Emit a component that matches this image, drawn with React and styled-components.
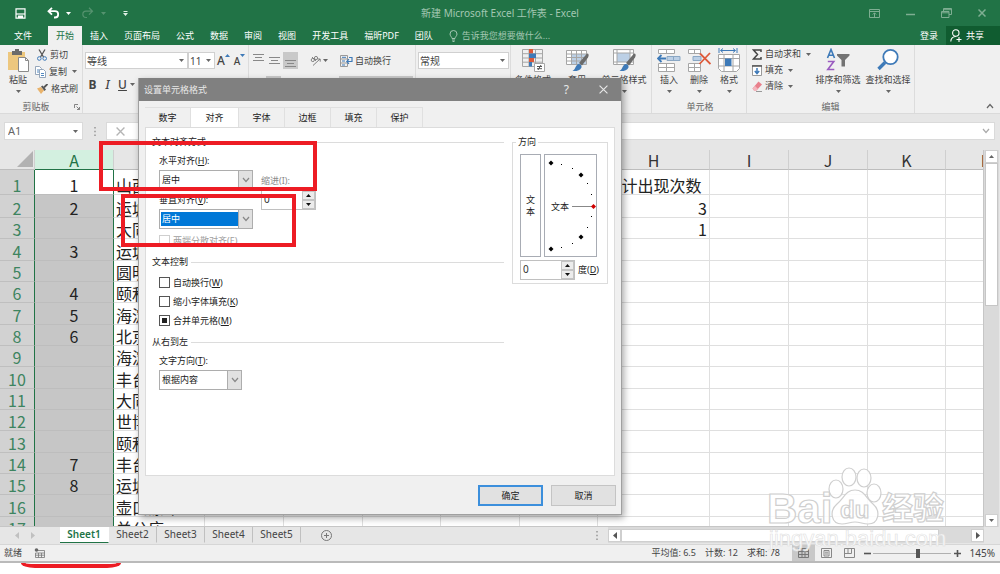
import React from 'react';
import styled, { createGlobalStyle, css } from 'styled-components';

const GREEN = '#217346';
const RED = '#ed1c24';
const BLUE = '#3e7ab8';

const GlobalStyle = createGlobalStyle`
* { box-sizing: border-box; }
body {
  margin: 0;
  background: #fff;
}
button, input, select, table {
  font: inherit;
  color: inherit;
}
button {
  border: 0;
  padding: 0;
  background: none;
  white-space: nowrap;
}
svg { display: block; flex: none; }
`;

const App_window = styled.div`
position: relative;
display: flex;
flex-direction: column;
height: 100vh;
overflow: hidden;
font-family: "Noto Sans", "Noto Sans CJK SC", sans-serif;
font-size: 9px;
line-height: 12px;
color: #444;
`;

/* ---------- title bar and ribbon tabs ---------- */

const Title_bar = styled.header`
display: grid;
grid-template-columns: 1fr auto 1fr;
align-items: center;
flex: none;
height: 26px;
background: ${GREEN};
color: #a3c7b2;
font-size: 10px;
`;
const Quick_access = styled.div`
display: flex;
align-items: center;
gap: 7px;
padding-left: 15px;
color: #fff;
button:nth-of-type(2) { margin-left: 14px; }
button:nth-of-type(3) { margin-left: 4px; }
button:nth-of-type(4) { margin-left: 10px; }
`;
const Window_buttons = styled.div`
display: flex;
justify-content: flex-end;
gap: 26px;
padding-right: 14px;
color: #7fae92;
`;
const Ribbon_tabs = styled.nav`
display: flex;
align-items: stretch;
flex: none;
height: 19px;
padding-left: 6px;
background: ${GREEN};
`;
const Ribbon_tab = styled.button`
padding: 0 8px;
color: ${p => p.$active ? GREEN : '#fff'};
background: ${p => p.$active ? '#f0f0f0' : 'none'};
&:first-child { margin-right: 8px; }
`;
const Tell_me = styled.button`
display: flex;
align-items: center;
gap: 4px;
margin-left: 8px;
color: #a3c7b2;
`;
const Account = styled.div`
display: flex;
margin-left: auto;
color: #fff;
`;
const Share = styled.button`
display: flex;
align-items: center;
gap: 4px;
width: 54px;
margin-left: 8px;
padding-left: 4px;
background: #105c30;
`;

/* ---------- ribbon ---------- */

const Ribbon = styled.div`
display: flex;
flex: none;
height: 68px;
background: #f0f0f0;
`;
const Group = styled.section`
display: flex;
flex-direction: column;
flex: none;
width: ${p => p.$width}px;
padding: 0 0 0 ${p => p.$pad || 0}px;
border-right: 1px solid #dcdcdc;
`;
const Group_body = styled.div`
display: flex;
flex: 1;
min-height: 0;
`;
const Group_label = styled.div`
display: flex;
justify-content: center;
align-items: center;
gap: 24px;
height: 12px;
padding-left: ${p => p.$indent || 0}px;
color: #666;
`;
const Big_button = styled.button`
display: flex;
flex-direction: column;
align-items: center;
justify-content: flex-start;
gap: 2px;
width: ${p => p.$width}px;
height: 50px;
padding-top: 3px;
svg:last-child { margin-top: 2px; }
`;
const Small_column = styled.div`
display: flex;
flex-direction: column;
width: ${p => p.$width}px;
padding: 1px 0 0 ${p => p.$pad}px;
`;
const Small_button = styled.button`
display: flex;
align-items: center;
gap: 3px;
height: ${p => p.$height || 17}px;
svg + svg, svg:last-child { margin-left: 2px; }
`;
const Tool_rows = styled.div`
display: flex;
flex-direction: column;
gap: 7px;
padding: 7px 0 0 2px;
`;
const Tool_row = styled.div`
display: flex;
align-items: center;
gap: ${p => p.$gap || 0}px;
height: 17px;
padding-left: ${p => p.$pad || 0}px;
`;
const Combo = styled.div`
display: flex;
align-items: center;
width: ${p => p.$width}px;
height: 17px;
padding: 0 3px 0 1px;
border: 1px solid #d0d0d0;
background: #fff;
font-size: 10px;
select {
  flex: 1;
  min-width: 0;
  appearance: none;
  border: 0;
  padding: 0;
  background: none;
}
`;
const Tool_button = styled.button`
display: flex;
align-items: ${p => p.$valign || 'center'};
justify-content: center;
gap: 2px;
min-width: 15px;
height: 17px;
padding: 2px 0;
width: ${p => p.$width ? p.$width + 'px' : 'auto'};
background: ${p => p.$active ? '#c9c9c9' : 'none'};
`;
const Letter_button = styled(Tool_button)`
align-items: center;
font-size: ${p => p.$small ? 10 : 12}px;
font-weight: ${p => p.$bold ? 700 : 500};
font-style: ${p => p.$italic ? 'italic' : 'normal'};
text-decoration: ${p => p.$underline ? 'underline' : 'none'};
gap: 0;
svg { align-self: flex-start; }
`;
const Ribbon_end = styled.div`
display: flex;
flex: 1;
align-items: flex-end;
justify-content: flex-end;
padding: 0 6px 4px 0;
`;

/* ---------- formula bar ---------- */

const Formula_bar = styled.div`
display: flex;
flex: none;
height: 37px;
padding: 8px 5px 10px 4px;
background: #e6e6e6;
border-top: 1px solid #dadada;
`;
const Name_box = styled.div`
display: flex;
align-items: center;
width: 79px;
padding: 0 4px 0 3px;
border: 1px solid #dadada;
background: #fff;
font-size: 11px;
input {
  flex: 1;
  min-width: 0;
  border: 0;
  padding: 0;
  background: none;
  color: #666;
}
`;
const Formula_box = styled.div`
display: flex;
align-items: center;
flex: 1;
padding: 0 4px 0 9px;
border: 1px solid #dadada;
background: #fff;
color: #b4b4b4;
input {
  flex: 1;
  border: 0;
  background: none;
}
`;
const Grip = styled.div`
display: flex;
align-items: center;
justify-content: center;
width: 23px;
`;

/* ---------- sheet ---------- */

const Sheet_area = styled.main`
display: flex;
flex: 1;
min-height: 0;
background: #e6e6e6;
`;
const Sheet_view = styled.div`
flex: 1;
min-width: 0;
overflow: hidden;
background: #fff;
border-right: 1px solid #c6c6c6;
border-bottom: 1px solid #c6c6c6;
`;
const Sheet_table = styled.table`
table-layout: fixed;
width: 0;
border-spacing: 0;
font-family: "Noto Sans CJK SC", sans-serif;
font-size: 16px;
line-height: 18px;
color: #222;
th, td {
  padding: 0;
  white-space: nowrap;
  vertical-align: bottom;
  font-weight: 400;
}
`;
const Column_head = styled.th`
height: 20px;
border-right: 1px solid #cfcfcf;
border-bottom: 1px solid ${p => p.$active ? GREEN : '#bdbdbd'};
background: ${p => p.$active ? '#d3f0e0' : '#e6e6e6'};
color: ${p => p.$active ? GREEN : '#333'};
`;
const Corner = styled(Column_head)`
svg { margin-left: 16px; }
`;
const Row_head = styled.th`
height: ${p => p.$height}px;
border-bottom: 1px solid #bfbfbf;
border-right: 1px solid ${GREEN};
background: #d2d2d2;
color: #3d8460;
`;
const Cell = styled.td`
border-right: 1px solid #dfdfdf;
border-bottom: 1px solid #dfdfdf;
text-align: ${p => p.$align || 'left'};
${p => p.$selected && css`
border-right: 1px solid ${GREEN};
border-bottom: 1px solid #bdbdbd;
background: ${p.$first ? '#fff' : '#c6c6c6'};
`}
&& { padding: 0 ${p => p.$align === 'center' ? 0 : 2}px; }
`;
const Vertical_scroll = styled.div`
display: flex;
flex-direction: column;
width: 15px;
margin-right: 1px;
padding: 0 1px;
background: #dadada;
`;
const Scroll_button = styled.button`
display: flex;
align-items: center;
justify-content: center;
flex: none;
width: 13px;
height: 13px;
border: 1px solid #cfcfcf;
background: #fff;
`;
const Vertical_thumb = styled.div`
flex: 0 0 38%;
border: 1px solid #c6c6c6;
background: #fff;
margin-bottom: auto;
`;

/* ---------- sheet tabs and status bar ---------- */

const Sheet_bar = styled.div`
display: flex;
flex: none;
height: 18px;
padding-right: 16px;
background: #e6e6e6;
border-bottom: 1px solid #d6d6d6;
font-size: 10px;
`;
const Sheet_nav = styled.div`
display: flex;
align-items: center;
gap: 12px;
width: 60px;
padding-left: 15px;
`;
const Sheet_tab = styled.button`
width: ${p => p.$active ? 49 : 48}px;
height: 16px;
line-height: 15px;
background: ${p => p.$active ? '#fff' : 'none'};
color: ${p => p.$active ? GREEN : '#444'};
font-weight: ${p => p.$active ? 600 : 400};
border-right: 1px solid ${p => p.$active ? '#fff' : '#c0c0c0'};
border-bottom: 1px solid ${p => p.$active ? GREEN : 'transparent'};
`;
const Add_sheet = styled.button`
margin-left: 20px;
`;
const Scroll_grip = styled(Grip)`
margin-left: auto;
`;
const Horizontal_scroll = styled.div`
display: flex;
align-items: center;
width: 376px;
height: 16px;
background: #dadada;
`;
const Horizontal_thumb = styled.div`
width: 318px;
height: 13px;
margin-right: auto;
border: 1px solid #cfcfcf;
background: #fff;
`;
const Status_bar = styled.footer`
display: flex;
align-items: center;
flex: none;
height: 18px;
padding: 0 5px 0 4px;
border-bottom: 2px solid #bababa;
background: #f0f0f0;
`;
const Status_ready = styled.div`
display: flex;
align-items: center;
gap: 12px;
`;
const Status_stats = styled.div`
display: flex;
gap: 9px;
margin-left: auto;
padding-right: 12px;
`;
const View_buttons = styled.div`
display: flex;
padding-right: 3px;
`;
const View_button = styled.button`
display: flex;
align-items: center;
justify-content: center;
width: 23px;
height: 16px;
background: ${p => p.$active ? '#c8c8c8' : 'none'};
`;
const Zoom_slider = styled.input`
appearance: none;
width: 78px;
height: 9px;
margin: 0 3px 0 2px;
background: linear-gradient(#b0b0b0, #b0b0b0) center / 100% 1px no-repeat;
&::-webkit-slider-thumb {
  appearance: none;
  width: 4px;
  height: 9px;
  background: #555;
}
`;
const Zoom_value = styled.span`
width: 34px;
text-align: right;
font-size: 10px;
`;
const Below_window = styled.div`
flex: none;
height: 11px;
padding-left: 21px;
background: #fff;
`;
const Red_arc = styled.div`
width: 100px;
height: 5px;
border: solid ${RED};
border-width: 0 4px 4px;
border-radius: 0 0 14px 14px / 0 0 5px 5px;
`;

/* ---------- format cells dialog ---------- */

const Dialog = styled.div`
position: absolute;
top: 78px;
left: 138px;
width: 484px;
border: 1px solid #a0a0a0;
border-top: 0;
background: #f0f0f0;
box-shadow: 2px 3px 7px rgba(0, 0, 0, 0.35);
color: #222;
`;
const Dialog_title = styled.div`
display: flex;
align-items: center;
height: 23px;
padding: 0 13px 0 5px;
background: #808080;
color: #e8e8e8;
`;
const Dialog_title_buttons = styled.div`
display: flex;
align-items: center;
gap: 30px;
margin-left: auto;
button:first-child { font-size: 12px; }
`;
const Dialog_tabs = styled.div`
display: flex;
height: 26px;
padding: 6px 6px 0;
`;
const Dialog_tab = styled.button`
width: ${p => p.$active ? 48 : 46}px;
border: 1px solid #e0e0e0;
border-left-width: 0;
border-bottom: 0;
background: ${p => p.$active ? '#fff' : '#f0f0f0'};
`;
const Dialog_panel = styled.div`
display: flex;
align-items: flex-start;
gap: 8px;
height: 349px;
margin: 0 6px;
padding: 8px 6px 0;
border: 1px solid #dcdcdc;
background: #fff;
`;
const Options = styled.div`
flex: 1;
`;
const Section_title = styled.div`
display: flex;
align-items: center;
gap: 3px;
&::after {
  content: '';
  flex: 1;
  height: 1px;
  background: #dcdcdc;
}
`;
const Section = styled.div`
display: flex;
padding: 7px 0 8px 7px;
gap: 8px;
`;
const Fields = styled.div`
display: flex;
flex-direction: column;
gap: 4px;
padding-top: ${p => p.$top || 0}px;
`;
const Field = styled.div`
display: flex;
flex-direction: column;
gap: 3px;
color: ${p => p.$disabled ? '#8a8a8a' : 'inherit'};
`;
const Drop_down = styled.div`
display: flex;
width: ${p => p.$width}px;
height: 20px;
border: 1px solid #adadad;
background: #fff;
select {
  flex: 1;
  min-width: 0;
  margin: 2px 0 2px 1px;
  border: 0;
  padding: 0 1px;
  appearance: none;
  background: ${p => p.$focused ? '#0078d7' : '#fff'};
  color: ${p => p.$focused ? '#fff' : 'inherit'};
}
`;
const Drop_arrow = styled.span`
display: flex;
align-items: center;
justify-content: center;
width: 14px;
border-left: 1px solid #adadad;
background: #e1e1e1;
`;
const Check_row = styled.label`
display: flex;
align-items: center;
gap: 3px;
height: 15px;
color: ${p => p.$disabled ? '#a0a0a0' : 'inherit'};
input {
  appearance: none;
  width: 11px;
  height: 11px;
  margin: 0;
  border: 1px solid ${p => p.$disabled ? '#cfcfcf' : '#555'};
  background: #fff;
}
input:checked {
  background: #222;
  box-shadow: inset 0 0 0 2px #fff;
}
`;
const Spinner = styled.div`
display: flex;
width: 55px;
height: 20px;
border: 1px solid #c0c0c0;
background: #fff;
font-size: 10px;
input {
  flex: 1;
  min-width: 0;
  border: 0;
  padding: 0 2px 2px;
  background: none;
  color: #333;
}
`;
const Spinner_buttons = styled.div`
display: flex;
flex-direction: column;
width: 13px;
button {
  display: flex;
  flex: 1;
  align-items: center;
  justify-content: center;
  border: 1px solid #c4c4c4;
  background: #ececec;
}
`;
const Orientation = styled.fieldset`
width: 96px;
margin: 0;
padding: 6px 7px 3px;
border: 1px solid #dcdcdc;
legend {
  padding: 0 2px;
  margin-left: -4px;
}
`;
const Orientation_boxes = styled.div`
display: flex;
gap: 3px;
margin-bottom: 3px;
`;
const Vertical_text = styled.button`
width: 21px;
height: 103px;
border: 1px solid #a8acb4;
white-space: normal;
padding: 0 4px;
`;
const Dial = styled.div`
height: 103px;
border: 1px solid #a8acb4;
`;
const Degree_row = styled.div`
display: flex;
align-items: center;
gap: 3px;
`;
const Dialog_footer = styled.div`
display: flex;
justify-content: flex-end;
gap: 8px;
padding: 9px 5px 8px;
`;
const Dialog_button = styled.button`
width: 65px;
height: 21px;
border: ${p => p.$primary ? '2px solid #3c8fdc' : '1px solid #c4c4c4'};
background: #e1e1e1;
`;

/* ---------- marks over the window ---------- */

const Red_frame = styled.div`
position: absolute;
left: ${p => p.$left}px;
top: ${p => p.$top}px;
width: ${p => p.$width}px;
height: ${p => p.$height}px;
border: 4px solid ${RED};
pointer-events: none;
`;
const Watermark = styled.svg`
position: absolute;
right: 50px;
bottom: 22px;
pointer-events: none;
`;

/* ---------- icons ---------- */

const Arrow = ({ up, color = '#666' }) => (
    <svg width="5" height="3" viewBox="0 0 5 3"><path d={up ? 'M0 3h5L2.5 0z' : 'M0 0h5L2.5 3z'} fill={color} /></svg>
);
const Side = ({ left, color = '#555' }) => (
    <svg width="4" height="7" viewBox="0 0 4 7"><path d={left ? 'M4 0v7L0 3.5z' : 'M0 0v7l4-3.5z'} fill={color} /></svg>
);
const Chevron = ({ up, color = '#666' }) => (
    <svg width="8" height="6" viewBox="0 0 8 6" fill="none" stroke={color} strokeWidth="1.2">
        <path d={up ? 'M1 5l3-3.5L7 5' : 'M1 1l3 3.5L7 1'} />
    </svg>
);
const Dots = () => (
    <svg width="2" height="9" viewBox="0 0 2 9" fill="#aaa"><path d="M0 0h2v1.5H0zM0 3.7h2v1.5H0zM0 7.4h2v1.5H0z" /></svg>
);
const Close = ({ size = 8, width = 1.2 }) => (
    <svg width={size} height={size} viewBox="0 0 8 8" stroke="currentColor" strokeWidth={width}>
        <path d="M.5.5l7 7M7.5.5l-7 7" />
    </svg>
);
const SaveIcon = () => (
    <svg width="11" height="11" viewBox="0 0 11 11" fill="none" stroke="#fff" strokeWidth="1.2">
        <path d="M1 .8h9v9.4H1z" /><path d="M1 6h9" /><path d="M3.5 10V8h4v2" fill="#fff" />
    </svg>
);
const UndoIcon = ({ redo }) => (
    <svg width="12" height="12" viewBox="0 0 12 12" fill="none" stroke={redo ? '#55936f' : '#fff'} strokeWidth={redo ? 1.2 : 1.8}>
        <g transform={redo ? 'matrix(-1 0 0 1 12 0)' : undefined}>
            <path d="M5 .8L1.500 4.200 5 7.600M1.500 4.200H8a2.800 2.800 0 0 1 0 6.300H7" />
        </g>
    </svg>
);
const CustomIcon = () => (
    <svg width="5" height="5" viewBox="0 0 5 5" fill="#e0eee6"><path d="M.5 0h4v1h-4zM0 2h5L2.5 5z" /></svg>
);
const RibbonDisplayIcon = () => (
    <svg width="11" height="9" viewBox="0 0 11 9" fill="none" stroke="currentColor"><path d="M.5.5h10v8H.5zM.5 2.500h10M5.500 8V4M3.800 5.500l1.700-1.700 1.700 1.700" /></svg>
);
const RestoreIcon = () => (
    <svg width="11" height="10" viewBox="0 0 11 10" fill="none" stroke="currentColor"><path d="M.5 3.500h7.500v6H.5zM.5 4.800H8M2.500 3.500v-3h8v6H8M2.500 1.700h8" /></svg>
);
const BulbIcon = () => (
    <svg width="9" height="12" viewBox="0 0 9 12" fill="none" stroke="currentColor">
        <path d="M3 8.500C3 7 1 6 1 4a3.500 3.500 0 0 1 7 0c0 2-2 3-2 4.500zM3 10h3M3.500 11.500h2" />
    </svg>
);
const PersonIcon = () => (
    <svg width="12" height="13" viewBox="0 0 12 13" fill="none" stroke="#fff" strokeWidth="1.1">
        <circle cx="5.800" cy="4" r="3.200" /><path d="M.8 12.500c0-3 2-5 5-5M6.500 10.500h5M9 8v5" />
    </svg>
);
const PasteIcon = () => (
    <svg width="24" height="24" viewBox="0 0 24 24">
        <path d="M2 4h17v18H2z" fill="#edc77e" />
        <path d="M6 3h3V1h4v2h3v4H6z" fill="#6b6b6b" />
        <path d="M12.500 9.500h7l3 3v11h-10z" fill="#fff" stroke="#8a8a8a" />
        <path d="M19.500 9.500v3h3" fill="none" stroke="#8a8a8a" />
    </svg>
);
const CutIcon = () => (
    <svg width="10" height="12" viewBox="0 0 10 12" fill="none">
        <path d="M2 .5l4.500 7.500M8 .5L3.500 8" stroke="#555" strokeWidth="1.3" />
        <circle cx="2.300" cy="9.500" r="1.800" stroke={BLUE} /><circle cx="7.700" cy="9.500" r="1.800" stroke={BLUE} />
    </svg>
);
const CopyIcon = () => (
    <svg width="11" height="12" viewBox="0 0 11 12" fill="#fff" stroke="#8a9db3" strokeWidth=".9">
        <path d="M.5.5h4l2 2v6h-6z" /><path d="M4.500 3.500h4l2 2v6h-6z" /><path d="M2 4h2M2 6h2M6 7.500h3M6 9.500h3" stroke={BLUE} />
    </svg>
);
const BrushIcon = () => (
    <svg width="11" height="10" viewBox="0 0 11 10">
        <path d="M0 4.500l4-1.500 3 3.500L4 10z" fill="#e9b36c" /><path d="M4 2.500l1.500-1L9 5.500 7.500 7z" fill="#555" /><path d="M7 3.500L10.500 0" stroke="#555" strokeWidth="1.800" />
    </svg>
);
const LauncherIcon = () => (
    <svg width="6" height="6" viewBox="0 0 6 6" fill="none" stroke="#777" strokeWidth=".9"><path d="M.5 4V.5H4M2.500 2.500l3 3M5.500 3v2.500H3" /></svg>
);
const LinesIcon = () => (
    <svg width="11" height="7" viewBox="0 0 11 7" stroke="#888"><path d="M0 .5h11M2 3.500h7M0 6.500h11" /></svg>
);
const AngleIcon = () => (
    <svg width="11" height="11" viewBox="0 0 11 11" fill="none" stroke="#777" strokeWidth=".9">
        <circle cx="2.800" cy="5" r="1.600" /><path d="M2 2l4 4" /><circle cx="6" cy="3" r="1.600" /><path d="M3 10.500l7-6.500M7.500 4h2.700v2.700" />
    </svg>
);
const WrapIcon = () => (
    <svg width="13" height="12" viewBox="0 0 13 12" fill="none">
        <path d="M.5.5h7v11h-7zM.5 4h7M.5 8h7" stroke="#999" /><path d="M2 2.300h4M2 6h3M2 10h3" stroke={BLUE} />
        <path d="M9 2.500h3v4H7M9 4.200L6.800 6.500 9 8.800" stroke={BLUE} strokeWidth="1.200" />
    </svg>
);
const ConditionalIcon = () => (
    <svg width="24" height="24" viewBox="0 0 24 24" fill="none">
        <path d="M1.500 1.500h20v17h-20zM1.500 5.700h20M1.500 10h20M1.500 14.200h20M8 1.500v17M14.500 1.500v17" stroke="#a6a6a6" />
        <path d="M8 1h4v4.500H8zM8 10h5v4H8z" fill="#dd5a3a" /><path d="M8 5.500h7V10H8zM8 14h3v4.500H8z" fill={BLUE} />
        <path d="M13.500 15.500h10v8h-10z" fill="#fff" stroke="#a6a6a6" /><path d="M16 18.500h5M16 20.700h5M20 17l-3 5" stroke="#555" />
    </svg>
);
const TableStyleIcon = ({ cell }) => (
    <svg width="24" height="24" viewBox="0 0 24 24" fill="none">
        <path d="M1.500 2.500h20v14h-20z" fill="#fff" />
        <path d={cell ? 'M5 5h13v9H5z' : 'M7 6h14v10H7z'} fill="#bcd0e6" />
        <path d={cell ? 'M1.500 1.500h20v15h-20zM1.500 5h20M1.500 14h20M5 1.500v15M18 1.500v15' : 'M1.500 2.500h20v14h-20zM1.500 6h20M1.500 9.500h20M1.500 13h20M6.500 2.500v14M11.500 2.500v14M16.500 2.500v14'} stroke="#a6a6a6" />
        <path d="M22 5.500c2 0 2 2 1 4l-6 8-3-2.500z" fill="#6b6b6b" />
        <path d="M13.500 16c2 0 3.500 1.500 3 3.500-1.500 3-5 4-9 3.500 3-1.500 3-6 6-7z" fill={BLUE} />
    </svg>
);
const InsertIcon = () => (
    <svg width="24" height="24" viewBox="0 0 24 24" fill="#fff" stroke="#a6a6a6">
        <path d="M1.500 1.500h16v4h-16zM9.500 1.500v4M1.500 15.500h16v8h-16zM9.500 15.500v8M1.500 19.500h16" />
        <path d="M10 8.500h13v4H10zM16.500 8.500v4" fill="#bcd0e6" stroke="#8aa7c4" /><path d="M9 10.500H1M4.500 7L1 10.500 4.500 14" fill="none" stroke={BLUE} strokeWidth="1.800" />
    </svg>
);
const DeleteIcon = () => (
    <svg width="24" height="24" viewBox="0 0 24 24" fill="#fff" stroke="#a6a6a6">
        <path d="M1.500 1.500h12v4h-12zM7.500 1.500v4M1.500 15.500h12v8h-12zM7.500 15.500v8M1.500 19.500h12" />
        <path d="M6 8.500h8v4H6z" fill="#bcd0e6" stroke="#8aa7c4" /><path d="M13 5.500L23.500 16M23 5L12.500 16" stroke="#dd5a3a" strokeWidth="1.800" />
    </svg>
);
const FormatIcon = () => (
    <svg width="24" height="24" viewBox="0 0 24 24" fill="none" stroke="#a6a6a6">
        <path d="M1.500 6.500h21v14l-3 3h-15l-3-3z" fill="#fff" /><path d="M1.500 10.500h21M1.500 18h21M7 6.500v17M16 6.500v17" />
        <path d="M8 10.500h6.500V18H8z" fill={BLUE} stroke="none" /><path d="M4 2.500h14M6 .5l-2.500 2L6 4.500M16 .5l2.500 2L16 4.500M2 0v5M20 0v5" stroke={BLUE} />
    </svg>
);
const SumIcon = () => (
    <svg width="10" height="11" viewBox="0 0 10 11" fill="none" stroke="#444" strokeWidth="1.500"><path d="M9 3V1H1.500L5.500 5.500 1.500 10H9V8" /></svg>
);
const FillIcon = () => (
    <svg width="10" height="11" viewBox="0 0 10 11" fill="#fff" stroke="#999"><path d="M.5.5h9v10h-9z" /><path d="M0 1h10" stroke="#555" strokeWidth="1.500" /><path d="M5 3v5.500M2.800 6L5 8.500 7.200 6" fill="none" stroke={BLUE} strokeWidth="1.500" /></svg>
);
const EraserIcon = () => (
    <svg width="10" height="11" viewBox="0 0 10 11"><path d="M.5 7.500L6.500.5 10 3.500 4.500 9.500H2z" fill="#e8808c" /><path d="M.5 7.500l2.300-2.700L6 8 4.500 9.500H2z" fill="#f3b6bd" /><path d="M4 10.500h6" stroke="#999" /></svg>
);
const SortIcon = () => (
    <svg width="24" height="24" viewBox="0 0 24 24" fill="none">
        <path d="M1.500 10L5 1.500 8.500 10M2.800 7.200h4.400" stroke={BLUE} strokeWidth="1.600" />
        <path d="M1.800 13.500h6L1.800 21.500h6.500" stroke="#9a5cc0" strokeWidth="1.600" />
        <path d="M11 6h12.500v1.500L19 12v6.500h-3.500V12L11 7.500z" fill="#737373" />
    </svg>
);
const FindIcon = () => (
    <svg width="24" height="24" viewBox="0 0 24 24" fill="#fff" stroke={BLUE}>
        <circle cx="14.500" cy="9" r="7.200" strokeWidth="1.800" /><path d="M9 14.500L2.500 21" strokeWidth="3.400" />
    </svg>
);
const MacroIcon = () => (
    <svg width="11" height="10" viewBox="0 0 11 10" fill="none" stroke="#777"><path d="M3 2.500h7.500v7H1.500V5M1.500 5h9M4.500 5v4.500M7.500 5v4.500M1.500 7.200h9" strokeWidth=".8" /><circle cx="2.500" cy="2" r="1.800" fill="#666" stroke="none" /></svg>
);
const GridIcon = () => (
    <svg width="11" height="10" viewBox="0 0 11 10" fill="none" stroke="#777"><path d="M.5.5h10v9H.5zM.5 3.500h10M.5 6.500h10M4 .5v9M7 .5v9" /></svg>
);
const PageIcon = () => (
    <svg width="11" height="10" viewBox="0 0 11 10" fill="none" stroke="#888"><path d="M.5.5h10v9H.5zM3 2.500h5v5.500H3zM4 4.200h3M4 6h3" /></svg>
);
const BreakIcon = () => (
    <svg width="11" height="10" viewBox="0 0 11 10" fill="none" stroke="#888"><path d="M.5.5h10v9H.5zM4 .5v5M7.500.5v5M.5 5.500h7" /></svg>
);
const PlusMinus = ({ plus }) => (
    <svg width="7" height="7" viewBox="0 0 7 7" stroke="#555" strokeWidth="1.600"><path d={plus ? 'M0 3.500h7M3.500 0v7' : 'M0 3.500h7'} /></svg>
);
const AddIcon = () => (
    <svg width="11" height="11" viewBox="0 0 11 11" fill="none" stroke="#777"><circle cx="5.500" cy="5.500" r="5" /><path d="M3 5.500h5M5.500 3v5" /></svg>
);

/* ---------- data ---------- */

const COLUMNS = [
    ['A', 79], ['B', 91], ['C', 79], ['D', 79], ['E', 78], ['F', 79], ['G', 78],
    ['H', 112], ['I', 79], ['J', 79], ['K', 78], ['L', 79],
];
const ROWS = [
    { A: '1', B: '山西', H: '统计出现次数' },
    { A: '2', B: '运城', H: '3' },
    { B: '大同', H: '1' },
    { A: '3', B: '运城' },
    { B: '圆明园' },
    { A: '4', B: '颐和园' },
    { A: '5', B: '海淀' },
    { A: '6', B: '北京' },
    { B: '海淀' },
    { B: '丰台' },
    { B: '大同' },
    { B: '世博' },
    { B: '颐和园' },
    { A: '7', B: '丰台' },
    { A: '8', B: '运城' },
    { B: '壶口瀑布' },
    { B: '关公庙' },
];
const RIBBON_TABS = ['文件', '开始', '插入', '页面布局', '公式', '数据', '审阅', '视图', '开发工具', '福昕PDF', '团队'];
const DIALOG_TABS = ['数字', '对齐', '字体', '边框', '填充', '保护'];
const SHEETS = ['Sheet1', 'Sheet2', 'Sheet3', 'Sheet4', 'Sheet5'];

const rowHeight = i => {
    if (i === 0) return 25;
    if (i === 1) return 23;
    return i % 3 === 0 ? 22 : 21;
};
const cellAlign = (name, text) => {
    if (name === 'A') return 'center';
    if (name === 'H') return text.length > 1 ? 'center' : 'right';
    return 'left';
};

class Sheet extends React.Component {
    render() {
        return (
            <Sheet_table>
                <colgroup>
                    <col style={{ width: 35 }} />
                    {COLUMNS.map(([name, width]) => <col key={name} style={{ width }} />)}
                </colgroup>
                <thead>
                    <tr>
                        <Corner><svg width="17" height="18" viewBox="0 0 17 18"><path d="M17 0v16H1z" fill="#b2b2b2" /></svg></Corner>
                        {COLUMNS.map(([name]) => <Column_head key={name} $active={name === 'A'}>{name}</Column_head>)}
                    </tr>
                </thead>
                <tbody>
                    {ROWS.map((row, i) => (
                        <tr key={i}>
                            <Row_head $height={rowHeight(i)}>{i + 1}</Row_head>
                            {COLUMNS.map(([name]) => (
                                <Cell
                                    key={name}
                                    $selected={name === 'A'}
                                    $first={i === 0}
                                    $align={cellAlign(name, row[name] || '')}
                                >
                                    {row[name]}
                                </Cell>
                            ))}
                        </tr>
                    ))}
                </tbody>
            </Sheet_table>
        );
    }
}

const DropDown = ({ id, value, width, focused }) => (
    <Drop_down $width={width} $focused={focused}>
        <select id={id} defaultValue={value}><option>{value}</option></select>
        <Drop_arrow><Chevron color="#888" /></Drop_arrow>
    </Drop_down>
);

const SpinBox = ({ id }) => (
    <Spinner>
        <input id={id} type="text" defaultValue="0" />
        <Spinner_buttons>
            <button aria-label="增加"><Arrow up color="#111" /></button>
            <button aria-label="减少"><Arrow color="#111" /></button>
        </Spinner_buttons>
    </Spinner>
);

const DialDrawing = () => (
    <svg width="51" height="101" viewBox="0 0 51 101">
        <text x="6" y="55" fontSize="9" fill="#222">文本</text>
        <path d="M27 51.500h20" stroke="#888" />
        {[[6, 8], [36, 20], [36, 82], [6, 94]].map(([x, y]) => (
            <path key={x + '-' + y} d={`M${x - 2.5} ${y}l2.5-2.5 2.5 2.5-2.5 2.5z`} fill="#000" />
        ))}
        <path d="M46 51.500l2.500-2.500 2.500 2.500-2.500 2.500z" fill="#d00000" />
        {[[16, 9], [27, 13], [42, 28], [46, 39], [46, 61], [42, 72], [27, 88], [16, 92]].map(([x, y]) => (
            <rect key={x + '-' + y} x={x} y={y} width="1" height="1" fill="#000" />
        ))}
    </svg>
);

class FormatDialog extends React.Component {
    render() {
        return (
            <Dialog role="dialog" aria-label="设置单元格格式">
                <Dialog_title>
                    设置单元格格式
                    <Dialog_title_buttons>
                        <button>?</button>
                        <button aria-label="关闭"><Close size={9} width={1} /></button>
                    </Dialog_title_buttons>
                </Dialog_title>
                <Dialog_tabs>
                    {DIALOG_TABS.map(tab => <Dialog_tab key={tab} $active={tab === '对齐'}>{tab}</Dialog_tab>)}
                </Dialog_tabs>
                <Dialog_panel>
                    <Options>
                        <Section_title>文本对齐方式</Section_title>
                        <Section>
                            <Fields>
                                <Field>
                                    <label htmlFor="horizontal">水平对齐(<u>H</u>):</label>
                                    <DropDown id="horizontal" value="居中" width={94} />
                                </Field>
                                <Field>
                                    <label htmlFor="vertical">垂直对齐(<u>V</u>):</label>
                                    <DropDown id="vertical" value="居中" width={94} focused />
                                </Field>
                                <Check_row $disabled><input type="checkbox" disabled />两端分散对齐(E)</Check_row>
                            </Fields>
                            <Fields $top={20}>
                                <Field $disabled>
                                    <label htmlFor="indent">缩进(I):</label>
                                    <SpinBox id="indent" />
                                </Field>
                            </Fields>
                        </Section>
                        <Section_title>文本控制</Section_title>
                        <Section>
                            <Fields>
                                <Check_row><input type="checkbox" /><span>自动换行(<u>W</u>)</span></Check_row>
                                <Check_row><input type="checkbox" /><span>缩小字体填充(<u>K</u>)</span></Check_row>
                                <Check_row><input type="checkbox" defaultChecked /><span>合并单元格(<u>M</u>)</span></Check_row>
                            </Fields>
                        </Section>
                        <Section_title>从右到左</Section_title>
                        <Section>
                            <Field>
                                <label htmlFor="direction">文字方向(<u>T</u>):</label>
                                <DropDown id="direction" value="根据内容" width={83} />
                            </Field>
                        </Section>
                    </Options>
                    <Orientation>
                        <legend>方向</legend>
                        <Orientation_boxes>
                            <Vertical_text>文本</Vertical_text>
                            <Dial><DialDrawing /></Dial>
                        </Orientation_boxes>
                        <Degree_row>
                            <SpinBox id="degree" />
                            <label htmlFor="degree">度(<u>D</u>)</label>
                        </Degree_row>
                    </Orientation>
                </Dialog_panel>
                <Dialog_footer>
                    <Dialog_button $primary>确定</Dialog_button>
                    <Dialog_button>取消</Dialog_button>
                </Dialog_footer>
            </Dialog>
        );
    }
}

const RibbonBar = () => (
    <Ribbon>
        <Group $width={83} $pad={2}>
            <Group_body>
                <Big_button $width={32}><PasteIcon />粘贴<Arrow /></Big_button>
                <Small_column $width={48} $pad={1}>
                    <Small_button><CutIcon />剪切</Small_button>
                    <Small_button><CopyIcon />复制<Arrow /></Small_button>
                    <Small_button><BrushIcon />格式刷</Small_button>
                </Small_column>
            </Group_body>
            <Group_label $indent={18}>剪贴板<LauncherIcon /></Group_label>
        </Group>
        <Group $width={166}>
            <Tool_rows>
                <Tool_row>
                    <Combo $width={103}><select aria-label="字体"><option>等线</option></select><Arrow /></Combo>
                    <Combo $width={27}><select aria-label="字号"><option>11</option></select><Arrow /></Combo>
                    <Letter_button $width={17}>A<Arrow up color={BLUE} /></Letter_button>
                    <Letter_button $small $width={15}>A<Arrow color={BLUE} /></Letter_button>
                </Tool_row>
                <Tool_row>
                    <Letter_button $bold>B</Letter_button>
                    <Letter_button $italic>I</Letter_button>
                    <Letter_button $underline>U</Letter_button>
                    <Arrow />
                </Tool_row>
            </Tool_rows>
        </Group>
        <Group $width={167}>
            <Tool_rows>
                <Tool_row $gap={1}>
                    <Tool_button $valign="flex-start"><LinesIcon /></Tool_button>
                    <Tool_button><LinesIcon /></Tool_button>
                    <Tool_button $active $valign="flex-end"><LinesIcon /></Tool_button>
                    <Tool_button $width={40}><AngleIcon /><Arrow /></Tool_button>
                    <Tool_button><WrapIcon />自动换行</Tool_button>
                </Tool_row>
                <Tool_row $gap={58} $pad={15}>
                    <Tool_button $active />
                    <Tool_button $active $width={74} />
                </Tool_row>
            </Tool_rows>
        </Group>
        <Group $width={95}>
            <Tool_rows>
                <Combo $width={91}><select aria-label="数字格式"><option>常规</option></select><Arrow /></Combo>
            </Tool_rows>
        </Group>
        <Group $width={141}>
            <Group_body>
                <Big_button $width={44}><ConditionalIcon />条件格式<Arrow /></Big_button>
                <Big_button $width={44}><TableStyleIcon />套用<Arrow /></Big_button>
                <Big_button $width={50}><TableStyleIcon cell />单元格样式<Arrow /></Big_button>
            </Group_body>
        </Group>
        <Group $width={95} $pad={2}>
            <Group_body>
                <Big_button $width={30}><InsertIcon />插入<Arrow /></Big_button>
                <Big_button $width={30}><DeleteIcon />删除<Arrow /></Big_button>
                <Big_button $width={30}><FormatIcon />格式<Arrow /></Big_button>
            </Group_body>
            <Group_label>单元格</Group_label>
        </Group>
        <Group $width={168}>
            <Group_body>
                <Small_column $width={66} $pad={5}>
                    <Small_button $height={16}><SumIcon />自动求和<Arrow /></Small_button>
                    <Small_button $height={16}><FillIcon />填充<Arrow /></Small_button>
                    <Small_button $height={16}><EraserIcon />清除<Arrow /></Small_button>
                </Small_column>
                <Big_button $width={50}><SortIcon />排序和筛选<Arrow /></Big_button>
                <Big_button $width={50}><FindIcon />查找和选择<Arrow /></Big_button>
            </Group_body>
            <Group_label>编辑</Group_label>
        </Group>
        <Ribbon_end><button aria-label="折叠功能区"><Chevron up /></button></Ribbon_end>
    </Ribbon>
);

export default function App() {
    return (
        <React.Fragment>
            <GlobalStyle />
            <App_window>
                <Title_bar>
                    <Quick_access>
                        <button aria-label="保存"><SaveIcon /></button>
                        <button aria-label="撤消"><UndoIcon /></button>
                        <Arrow color="#fff" />
                        <button aria-label="恢复"><UndoIcon redo /></button>
                        <Arrow color="#55936f" />
                        <button aria-label="自定义"><CustomIcon /></button>
                    </Quick_access>
                    <span>新建 Microsoft Excel 工作表 - Excel</span>
                    <Window_buttons>
                        <button aria-label="功能区显示选项"><RibbonDisplayIcon /></button>
                        <button aria-label="最小化"><svg width="9" height="9" viewBox="0 0 9 9"><path d="M0 5.500h9" stroke="currentColor" strokeWidth="1.500" /></svg></button>
                        <button aria-label="还原"><RestoreIcon /></button>
                        <button aria-label="关闭窗口"><Close width={1.5} /></button>
                    </Window_buttons>
                </Title_bar>
                <Ribbon_tabs>
                    {RIBBON_TABS.map(tab => <Ribbon_tab key={tab} $active={tab === '开始'}>{tab}</Ribbon_tab>)}
                    <Tell_me><BulbIcon />告诉我您想要做什么...</Tell_me>
                    <Account>
                        <button>登录</button>
                        <Share><PersonIcon />共享</Share>
                    </Account>
                </Ribbon_tabs>
                <RibbonBar />
                <Formula_bar>
                    <Name_box><input aria-label="名称框" defaultValue="A1" /><Arrow /></Name_box>
                    <Grip><Dots /></Grip>
                    <Formula_box>
                        <Close size={9} />
                        <input aria-label="编辑栏" />
                        <Chevron color="#aaa" />
                    </Formula_box>
                </Formula_bar>
                <Sheet_area>
                    <Sheet_view><Sheet /></Sheet_view>
                    <Vertical_scroll>
                        <Scroll_button aria-label="向上滚动"><Arrow up /></Scroll_button>
                        <Vertical_thumb />
                        <Scroll_button aria-label="向下滚动"><Arrow /></Scroll_button>
                    </Vertical_scroll>
                </Sheet_area>
                <Sheet_bar>
                    <Sheet_nav><Side left color="#c0c0c0" /><Side color="#c0c0c0" /></Sheet_nav>
                    {SHEETS.map((name, i) => <Sheet_tab key={name} $active={i === 0}>{name}</Sheet_tab>)}
                    <Add_sheet aria-label="新工作表"><AddIcon /></Add_sheet>
                    <Scroll_grip><Dots /></Scroll_grip>
                    <Horizontal_scroll>
                        <Scroll_button aria-label="向左滚动"><Side left /></Scroll_button>
                        <Horizontal_thumb />
                        <Scroll_button aria-label="向右滚动"><Side /></Scroll_button>
                    </Horizontal_scroll>
                </Sheet_bar>
                <Status_bar>
                    <Status_ready>就绪<MacroIcon /></Status_ready>
                    <Status_stats>
                        <span>平均值: 6.5</span>
                        <span>计数: 12</span>
                        <span>求和: 78</span>
                    </Status_stats>
                    <View_buttons>
                        <View_button $active aria-label="普通"><GridIcon /></View_button>
                        <View_button aria-label="页面布局视图"><PageIcon /></View_button>
                        <View_button aria-label="分页预览"><BreakIcon /></View_button>
                    </View_buttons>
                    <button aria-label="缩小"><PlusMinus /></button>
                    <Zoom_slider type="range" aria-label="显示比例" defaultValue="58" />
                    <button aria-label="放大"><PlusMinus plus /></button>
                    <Zoom_value>145%</Zoom_value>
                </Status_bar>
                <Below_window><Red_arc /></Below_window>

                <FormatDialog />
                <Red_frame $left={99} $top={141} $width={218} $height={50} />
                <Red_frame $left={121} $top={194} $width={175} $height={53} />
                <Watermark width="184" height="90" viewBox="0 0 184 90" fill="rgba(255,255,255,0.85)" stroke="#cfcfcf" strokeWidth="1.2" fontFamily="Liberation Sans, Noto Sans CJK SC, sans-serif" fontWeight="700">
                    <text x="1" y="61" fontSize="42">Bai</text>
                    <ellipse cx="70" cy="27" rx="7" ry="9" />
                    <ellipse cx="83" cy="15" rx="7" ry="9" />
                    <ellipse cx="98" cy="16" rx="7" ry="9" />
                    <ellipse cx="108" cy="31" rx="7" ry="9" />
                    <path d="M89 28c9 0 11 8 18 14 8 7 6 20-5 20-5 0-8-2-13-2s-8 2-13 2c-11 0-13-13-5-20 7-6 9-14 18-14z" />
                    <text x="74" y="56" fontSize="24">du</text>
                    <text x="116" y="57" fontSize="31">经验</text>
                    <text x="3" y="84" fontSize="22" fontWeight="400" stroke="#e0e0e0" strokeWidth="0.6">jingyan.baidu.com</text>
                </Watermark>
            </App_window>
        </React.Fragment>
    );
}
